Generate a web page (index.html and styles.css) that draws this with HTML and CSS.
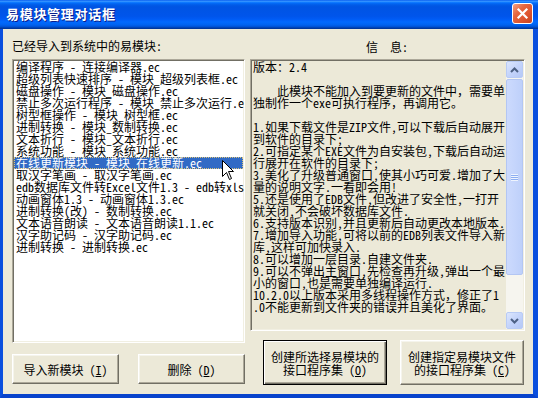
FILE: index.html
```html
<!DOCTYPE html>
<html lang="zh-CN">
<head>
<meta charset="utf-8">
<title>易模块管理对话框</title>
<link rel="stylesheet" href="styles.css">
</head>
<body>
<div class="window">
  <div class="titlebar">
    <span class="title">易模块管理对话框</span>
    <button class="close" aria-label="关闭"><svg width="13" height="13" viewBox="0 0 13 13"><path d="M2.5 2.5 L10.5 10.5 M10.5 2.5 L2.5 10.5" stroke="#fff" stroke-width="2.2" stroke-linecap="square" fill="none"/></svg></button>
  </div>
  <div class="client">
    <div class="col left">
      <div class="label">已经导入到系统中的易模块:</div>
      <ul class="list">
        <li>编译程序 - 连接编译器.ec</li>
        <li>超级列表快速排序 - 模块_超级列表框.ec</li>
        <li>磁盘操作 - 模块_磁盘操作.ec</li>
        <li>禁止多次运行程序 - 模块_禁止多次运行.ec</li>
        <li>树型框操作 - 模块_树型框.ec</li>
        <li>进制转换 - 模块_数制转换.ec</li>
        <li>文本折行 - 模块_文本折行.ec</li>
        <li>系统功能 - 模块_系统功能.ec</li>
        <li class="selected">在线更新模块 - 模块_在线更新.ec</li>
        <li>取汉字笔画 - 取汉字笔画.ec</li>
        <li>edb数据库文件转Excel文件1.3 - edb转xls.ec</li>
        <li>动画窗体1.3 - 动画窗体1.3.ec</li>
        <li>进制转换(改) - 数制转换.ec</li>
        <li>文本语音朗读 - 文本语音朗读1.1.ec</li>
        <li>汉字助记码 - 汉字助记码.ec</li>
        <li>进制转换 - 进制转换.ec</li>
      </ul>
      <div class="btnrow btnrow-left">
        <button class="btn small">导入新模块 (<u>I</u>)</button>
        <button class="btn small">删除 (<u>D</u>)</button>
      </div>
    </div>
    <div class="col right">
      <div class="label info-label"><span class="gap">信</span><span>息:</span></div>
      <div class="infobox">
        <div class="text">
          <div class="ln">版本：2.4</div>
          <div class="ln"> </div>
          <div class="ln">    此模块不能加入到要更新的文件中，需要单</div>
          <div class="ln">独制作一个exe可执行程序，再调用它。</div>
          <div class="ln"> </div>
          <div class="ln">1.如果下载文件是ZIP文件,可以下载后自动展开</div>
          <div class="ln">到软件的目录下;</div>
          <div class="ln">2.可指定某个EXE文件为自安装包,下载后自动运</div>
          <div class="ln">行展开在软件的目录下;</div>
          <div class="ln">3.美化了升级普通窗口,使其小巧可爱.增加了大</div>
          <div class="ln">量的说明文字.一看即会用!</div>
          <div class="ln">5.还是使用了EDB文件,但改进了安全性,一打开</div>
          <div class="ln">就关闭,不会破坏数据库文件.</div>
          <div class="ln">6.支持版本识别,并且更新后自动更改本地版本.</div>
          <div class="ln">7.增加导入功能,可将以前的EDB列表文件导入新</div>
          <div class="ln">库,这样可加快录入.</div>
          <div class="ln">8.可以增加一层目录.自建文件夹.</div>
          <div class="ln">9.可以不弹出主窗口,先检查再升级,弹出一个最</div>
          <div class="ln">小的窗口,也是需要单独编译运行.</div>
          <div class="ln">10.2.0以上版本采用多线程操作方式，修正了1</div>
          <div class="ln">.0不能更新到文件夹的错误并且美化了界面。</div>
        </div>
        <div class="scrollbar">
          <div class="sbtn"><svg width="9" height="6" viewBox="0 0 9 6"><path d="M1 5 L4.5 1.5 L8 5" stroke="#4D6185" stroke-width="2" fill="none"/></svg></div>
          <div class="thumb"><span class="grip"></span></div>
          <div class="track"></div>
          <div class="sbtn"><svg width="9" height="6" viewBox="0 0 9 6"><path d="M1 1 L4.5 4.5 L8 1" stroke="#4D6185" stroke-width="2" fill="none"/></svg></div>
        </div>
      </div>
      <div class="btnrow btnrow-right">
        <button class="btn big default">创建所选择易模块的<br>接口程序集 (<u>O</u>)</button>
        <button class="btn big">创建指定易模块文件<br>的接口程序集 (<u>C</u>)</button>
      </div>
    </div>
  </div>
  <svg class="cursor" width="13" height="21" viewBox="0 0 13 21"><path d="M0.5 0.5 V16.5 L4.5 12.5 L7.5 19.5 L9.5 18.5 L6.5 11.5 H11.5 Z" fill="#fff" stroke="#000" stroke-width="1"/></svg>
</div>
</body>
</html>
```
FILE: styles.css
```css
* { box-sizing: border-box; }
html, body { margin: 0; padding: 0; }
body {
  width: 538px;
  height: 398px;
  overflow: hidden;
  font-family: "Noto Sans Mono CJK SC", "Noto Sans CJK SC", "Liberation Mono", monospace;
  font-size: 12px;
  color: #000;
}
.window {
  position: relative;
  width: 538px;
  height: 398px;
  display: flex;
  flex-direction: column;
  background: #ECE9D8;
}
.titlebar {
  flex: none;
  height: 29px;
  display: flex;
  align-items: flex-start;
  justify-content: space-between;
  background: linear-gradient(to bottom, #0058EE 0%, #3A93FF 4%, #288EFF 6%, #127DFF 8%, #036FFC 10%, #0262EE 14%, #0057E5 20%, #0054E3 24%, #0055EB 56%, #005BF5 66%, #026AFE 76%, #0062EF 86%, #0052D6 92%, #0040AB 96%, #003092 100%);
}
.title {
  margin: 7px 0 0 6px;
  color: #fff;
  font-family: "Noto Sans CJK SC", sans-serif;
  font-weight: bold;
  font-size: 13px;
  line-height: 14px;
  letter-spacing: 0.7px;
  text-shadow: 1px 1px 0 #0A1E8C;
}
.close {
  margin: 3px 5px 0 0;
  width: 21px;
  height: 21px;
  padding: 0;
  border: 1px solid #fff;
  border-radius: 3px;
  background: linear-gradient(135deg, #F4A183 0%, #E6663F 35%, #DE5530 65%, #C8431F 100%);
  display: flex;
  align-items: center;
  justify-content: center;
}
.client {
  flex: 1;
  display: flex;
  gap: 5px;
  padding: 11px 0 0 9px;
  border-left: 3px solid #0A4FDE;
  border-right: 5px solid #0A4FDE;
  border-bottom: 4px solid #0843CC;
}
.col { display: flex; flex-direction: column; }
.left { width: 233px; }
.right { width: 275px; }
.label {
  height: 12px;
  line-height: 12px;
  margin-bottom: 7px;
  white-space: nowrap;
}
.info-label {
  margin-top: 1px;
  margin-bottom: 6px;
  padding-left: 116px;
}
.info-label .gap { margin-right: 12px; }
.list {
  margin: 0;
  padding: 1px;
  list-style: none;
  height: 284px;
  background: #fff;
  border: 1px solid;
  border-color: #ACA899 #fff #fff #ACA899;
  box-shadow: inset 1px 1px #716F64, inset -1px -1px #F1EFE2;
  overflow: hidden;
}
.list li {
  height: 12px;
  line-height: 12px;
  padding-left: 2px;
  white-space: nowrap;
}
.list li.selected {
  background: #316AC5;
  color: #fff;
  outline: 1px dotted #D8C27A;
  outline-offset: -1px;
}
.btnrow { display: flex; }
.btnrow-left { margin-top: 11px; justify-content: space-between; }
.btnrow-right { margin-top: 9px; padding-left: 13px; gap: 13px; }
.btn {
  font: inherit;
  font-size: 12px;
  line-height: 13px;
  color: #000;
  background: #ECE9D8;
  padding: 0;
  border: 1px solid;
  border-color: #fff #716F64 #716F64 #fff;
  box-shadow: inset -1px -1px #ACA899, inset 1px 1px #F5F4EC;
  text-align: center;
}
.btn.small { width: 107px; height: 30px; }
.btn.big { width: 124px; height: 45px; }
.btn.default {
  border-color: #000;
  box-shadow: inset 1px 1px #fff, inset -1px -1px #716F64, inset -2px -2px #ACA899;
}
.infobox {
  display: flex;
  height: 272px;
  border: 1px solid;
  border-color: #ACA899 #fff #fff #ACA899;
  box-shadow: inset 1px 1px #716F64, inset -1px -1px #F1EFE2;
  padding: 1px;
}
.text {
  flex: 1;
  padding-left: 1px;
  overflow: hidden;
}
.ln {
  height: 12px;
  line-height: 12px;
  white-space: pre;
}
.scrollbar {
  width: 17px;
  display: flex;
  flex-direction: column;
  background: #F6F5EF;
}
.sbtn {
  height: 17px;
  flex: none;
  border: 1px solid #B8CBF5;
  border-radius: 2px;
  background: linear-gradient(135deg, #DCE6FD 0%, #C4D4FB 50%, #B5C8F6 100%);
  display: flex;
  align-items: center;
  justify-content: center;
}
.thumb {
  height: 196px;
  flex: none;
  margin-top: 1px;
  border: 1px solid #B3C6F3;
  border-radius: 2px;
  background: linear-gradient(to right, #CCDAFD, #BED0FA);
  display: flex;
  align-items: center;
  justify-content: center;
}
.grip {
  width: 7px;
  height: 7px;
  background: repeating-linear-gradient(to bottom, #EEF4FE 0 1px, #8DAEF2 1px 2px);
}
.track { flex: 1; }
.cursor {
  position: absolute;
  left: 222px;
  top: 160px;
}
```
